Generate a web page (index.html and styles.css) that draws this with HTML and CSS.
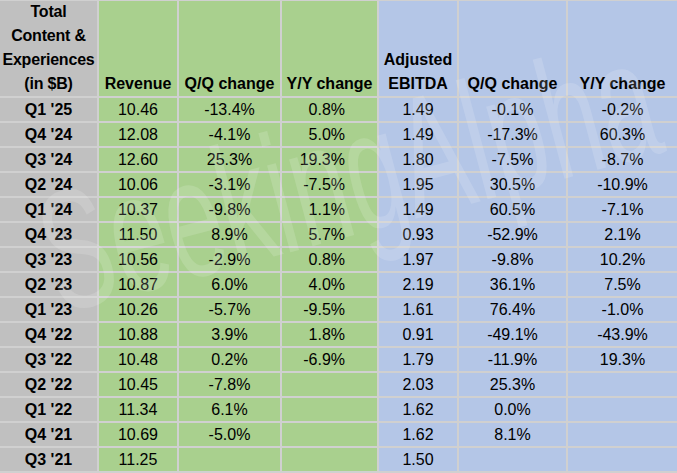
FILE: index.html
```html
<!DOCTYPE html>
<html>
<head>
<meta charset="utf-8">
<link rel="stylesheet" href="styles.css">
</head>
<body>
<div class="wrap">
<div class="table">
  <div class="c g h">Total<br>Content &amp;<br>Experiences<br>(in $B)</div>
  <div class="c gr h">Revenue</div>
  <div class="c gr h">Q/Q change</div>
  <div class="c gr h">Y/Y change</div>
  <div class="c bl h">Adjusted<br>EBITDA</div>
  <div class="c bl h">Q/Q change</div>
  <div class="c bl h">Y/Y change</div>

  <div class="c g b">Q1 '25</div><div class="c gr">10.46</div><div class="c gr">-13.4%</div><div class="c gr r">0.8%</div><div class="c bl">1.49</div><div class="c bl">-0.1%</div><div class="c bl">-0.2%</div>
  <div class="c g b">Q4 '24</div><div class="c gr">12.08</div><div class="c gr">-4.1%</div><div class="c gr r">5.0%</div><div class="c bl">1.49</div><div class="c bl">-17.3%</div><div class="c bl">60.3%</div>
  <div class="c g b">Q3 '24</div><div class="c gr">12.60</div><div class="c gr">25.3%</div><div class="c gr r">19.3%</div><div class="c bl">1.80</div><div class="c bl">-7.5%</div><div class="c bl">-8.7%</div>
  <div class="c g b">Q2 '24</div><div class="c gr">10.06</div><div class="c gr">-3.1%</div><div class="c gr r">-7.5%</div><div class="c bl">1.95</div><div class="c bl">30.5%</div><div class="c bl">-10.9%</div>
  <div class="c g b">Q1 '24</div><div class="c gr">10.37</div><div class="c gr">-9.8%</div><div class="c gr r">1.1%</div><div class="c bl">1.49</div><div class="c bl">60.5%</div><div class="c bl">-7.1%</div>
  <div class="c g b">Q4 '23</div><div class="c gr">11.50</div><div class="c gr">8.9%</div><div class="c gr r">5.7%</div><div class="c bl">0.93</div><div class="c bl">-52.9%</div><div class="c bl">2.1%</div>
  <div class="c g b">Q3 '23</div><div class="c gr">10.56</div><div class="c gr">-2.9%</div><div class="c gr r">0.8%</div><div class="c bl">1.97</div><div class="c bl">-9.8%</div><div class="c bl">10.2%</div>
  <div class="c g b">Q2 '23</div><div class="c gr">10.87</div><div class="c gr">6.0%</div><div class="c gr r">4.0%</div><div class="c bl">2.19</div><div class="c bl">36.1%</div><div class="c bl">7.5%</div>
  <div class="c g b">Q1 '23</div><div class="c gr">10.26</div><div class="c gr">-5.7%</div><div class="c gr r">-9.5%</div><div class="c bl">1.61</div><div class="c bl">76.4%</div><div class="c bl">-1.0%</div>
  <div class="c g b">Q4 '22</div><div class="c gr">10.88</div><div class="c gr">3.9%</div><div class="c gr r">1.8%</div><div class="c bl">0.91</div><div class="c bl">-49.1%</div><div class="c bl">-43.9%</div>
  <div class="c g b">Q3 '22</div><div class="c gr">10.48</div><div class="c gr">0.2%</div><div class="c gr r">-6.9%</div><div class="c bl">1.79</div><div class="c bl">-11.9%</div><div class="c bl">19.3%</div>
  <div class="c g b">Q2 '22</div><div class="c gr">10.45</div><div class="c gr">-7.8%</div><div class="c gr r"></div><div class="c bl">2.03</div><div class="c bl">25.3%</div><div class="c bl"></div>
  <div class="c g b">Q1 '22</div><div class="c gr">11.34</div><div class="c gr">6.1%</div><div class="c gr r"></div><div class="c bl">1.62</div><div class="c bl">0.0%</div><div class="c bl"></div>
  <div class="c g b">Q4 '21</div><div class="c gr">10.69</div><div class="c gr">-5.0%</div><div class="c gr r"></div><div class="c bl">1.62</div><div class="c bl">8.1%</div><div class="c bl"></div>
  <div class="c g b">Q3 '21</div><div class="c gr">11.25</div><div class="c gr"></div><div class="c gr r"></div><div class="c bl">1.50</div><div class="c bl"></div><div class="c bl"></div>
</div>
<div class="watermark">SeekingAlpha</div>
</div>
</body>
</html>
```
FILE: styles.css
```css
html, body {
  margin: 0;
  padding: 0;
  background: #d0d0d0;
}
.wrap {
  position: relative;
  width: 677px;
  height: 473px;
  overflow: hidden;
}
.table {
  display: grid;
  grid-template-columns: 97px 78px 101px 95px 78px 107px 109px;
  grid-template-rows: 95px repeat(15, 23px);
  gap: 2px;
  padding: 1px 0 2px 0;
  background: #d0d0d0;
  font-family: "Liberation Sans", Arial, sans-serif;
  font-size: 16px;
  color: #000;
}
.c {
  display: flex;
  align-items: center;
  justify-content: center;
  text-align: center;
  white-space: nowrap;
  line-height: 23px;
}
.h {
  font-weight: bold;
  align-items: flex-end;
  line-height: 24px;
}
.g.h {
  letter-spacing: -0.2px;
}
.b {
  font-weight: bold;
}
.g { background: #c0c0c0; }
.gr { background: #a9d08e; }
.bl { background: #b4c6e7; }
.r {
  justify-content: flex-end;
  padding-right: 32px;
}
.watermark {
  position: absolute;
  left: 22px;
  top: 175px;
  font-family: "Liberation Sans", Arial, sans-serif;
  font-size: 170px;
  line-height: 1;
  color: rgba(255, 255, 255, 0.15);
  transform: rotate(-15deg) scaleX(0.6);
  transform-origin: left top;
  white-space: nowrap;
  pointer-events: none;
}
```
